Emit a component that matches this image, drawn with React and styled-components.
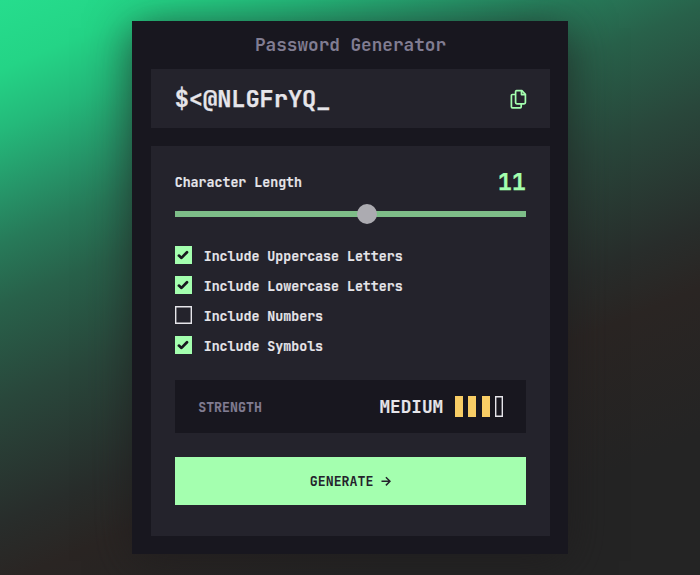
import React, { useState } from "react";
import styled, { createGlobalStyle } from "styled-components";

const GlobalStyle = createGlobalStyle`
  * { box-sizing: border-box; }
  body {
    margin: 0;
    font-family: "JetBrains Mono", "DejaVu Sans Mono", monospace;
    font-size: 13.27px;
    font-weight: 700;
    color: #e6e5ea;
    background: #242424;
  }
`;

const Page = styled.div`
  height: 575px;
  padding-top: 21px;
  display: flex;
  justify-content: center;
  align-items: flex-start;
  overflow: hidden;
  background: linear-gradient(157deg, #26dd8d 0%, #24d486 8%, #24b97a 15%, #269468 22.5%, #277a59 28%, #28614a 35%, #29473b 46%, #282d2b 60%, #2a2523 67%, #242424 84%);
`;

const Card = styled.main`
  width: 436px;
  height: 532.7px;
  padding: 0 18px 0 19px;
  background: #18171f;
  box-shadow: 0 7px 42px rgba(30, 27, 28, 0.7);
`;

const Title = styled.h1`
  margin: 0;
  height: 48.3px;
  line-height: 48px;
  text-align: center;
  font-size: 17.7px;
  font-weight: 700;
  color: #817d92;
`;

const Panel = styled.section`
  background: #24232c;
  padding: 0 24px 0 23.7px;
`;

const PasswordPanel = styled(Panel)`
  height: 59px;
  display: flex;
  align-items: center;
  justify-content: space-between;
`;

const Password = styled.span`
  font-size: 23.6px;
  line-height: 30px;
  padding-top: 1px;
  -webkit-text-stroke: 0.25px currentColor;
`;

const SettingsPanel = styled(Panel)`
  margin-top: 18.1px;
  height: 390px;
`;

const LengthRow = styled.div`
  height: 54.5px;
  padding-top: 16px;
  display: flex;
  align-items: center;
  justify-content: space-between;
`;

const Label = styled.span`
  line-height: 18px;
  white-space: pre;
  -webkit-text-stroke: 0.15px currentColor;
`;

const LengthValue = styled.span`
  font-size: 23.6px;
  line-height: 30px;
  color: #a4ffaf;
  -webkit-text-stroke: 0.25px currentColor;
`;

const Slider = styled.input`
  appearance: none;
  display: block;
  width: 100%;
  height: 6.2px;
  margin: 10px 0 0;
  background: #a4ffaf;
  opacity: 0.7;
  &::-webkit-slider-thumb {
    appearance: none;
    width: 20.5px;
    height: 20.5px;
    border-radius: 50%;
    background: #e6e5ea;
  }
`;

const Options = styled.div`
  margin-top: 29px;
  display: grid;
  grid-auto-rows: 18px;
  row-gap: 12.1px;
`;

const Option = styled.label`
  display: flex;
  align-items: center;
  gap: 11.6px;
  ${Label} { padding-top: 2px; }
`;

const Box = styled.span`
  width: 17.4px;
  height: 18px;
  display: flex;
  align-items: center;
  justify-content: center;
  background: ${(p) => (p.$checked ? "#a4ffaf" : "transparent")};
  box-shadow: ${(p) => (p.$checked ? "none" : "inset 0 0 0 1.4px #e6e5ea")};
`;

const Strength = styled.div`
  margin-top: 25.6px;
  height: 53.2px;
  padding: 0 23px 0 23.5px;
  background: #18171f;
  display: flex;
  align-items: center;
  justify-content: space-between;
`;

const StrengthLabel = styled(Label)`
  color: #817d92;
  padding-top: 1px;
`;

const Meter = styled.div`
  display: flex;
  align-items: center;
`;

const Level = styled.span`
  margin-right: 11.7px;
  padding-top: 1px;
  font-size: 17.7px;
  line-height: 24px;
  -webkit-text-stroke: 0.15px currentColor;
`;

const Bar = styled.span`
  width: 8px;
  height: 21px;
  margin-left: ${(p) => (p.$first ? "0" : "5.4px")};
  background: ${(p) => (p.$filled ? "#f8cd65" : "transparent")};
  box-shadow: ${(p) => (p.$filled ? "none" : "inset 0 0 0 1.4px #e6e5ea")};
`;

const Generate = styled.button`
  margin-top: 23.9px;
  width: 100%;
  height: 48px;
  padding: 0;
  border: 0;
  background: #a4ffaf;
  color: #24232c;
  font: inherit;
  display: flex;
  align-items: center;
  justify-content: center;
  gap: 7.5px;
  ${Label} { -webkit-text-stroke: 0; }
`;

const CopyIcon = () => (
  <svg width="16" height="19" viewBox="0 0 16 19" fill="none" stroke="#a4ffaf" strokeWidth="1.7" strokeLinejoin="round" overflow="visible" transform="translate(0.5 0.7)">
    <path d="M6 1H11.4L14.9 4.6V12.9Q14.9 14.2 13.6 14.2H6.4Q5.1 14.2 5.1 12.9V2.1Q5.1 1 6 1Z" />
    <path d="M11 1.2V4.9H14.8" />
    <path d="M5 4.8H1.9Q.9 4.8.9 5.8V17.1Q.9 18.2 1.9 18.2H9.7Q10.7 18.2 10.7 17.1V14.2" />
  </svg>
);

const CheckIcon = () => (
  <svg width="12" height="10" viewBox="0 0 12 10" fill="none" stroke="#18171f" strokeWidth="2.7">
    <path d="M1.9 5.6L4.5 7.9L10 2.2" strokeLinejoin="round" strokeLinecap="round" />
  </svg>
);

const ArrowIcon = () => (
  <svg width="10" height="10" viewBox="0 0 10 10" fill="none" stroke="currentColor" strokeWidth="1.5">
    <path d="M.5 5.3H8.8M4.9 1.2L9 5.3L4.9 9.4" />
  </svg>
);

const options = [
  ["Include Uppercase Letters", true],
  ["Include Lowercase Letters", true],
  ["Include Numbers", false],
  ["Include Symbols", true],
];

export default function App() {
  const [length, setLength] = useState(11);
  return (
    <Page>
      <GlobalStyle />
      <Card>
        <Title>Password Generator</Title>
        <PasswordPanel>
          <Password>{"$<@NLGFrYQ_"}</Password>
          <CopyIcon />
        </PasswordPanel>
        <SettingsPanel>
          <LengthRow>
            <Label>Character Length</Label>
            <LengthValue>{length}</LengthValue>
          </LengthRow>
          <Slider type="range" min="0" max="20" value={length} onChange={(e) => setLength(+e.target.value)} />
          <Options>
            {options.map(([text, checked]) => (
              <Option key={text}>
                <Box $checked={checked}>{checked && <CheckIcon />}</Box>
                <Label>{text}</Label>
              </Option>
            ))}
          </Options>
          <Strength>
            <StrengthLabel>STRENGTH</StrengthLabel>
            <Meter>
              <Level>MEDIUM</Level>
              <Bar $first $filled />
              <Bar $filled />
              <Bar $filled />
              <Bar />
            </Meter>
          </Strength>
          <Generate>
            <Label>GENERATE</Label>
            <ArrowIcon />
          </Generate>
        </SettingsPanel>
      </Card>
    </Page>
  );
}
